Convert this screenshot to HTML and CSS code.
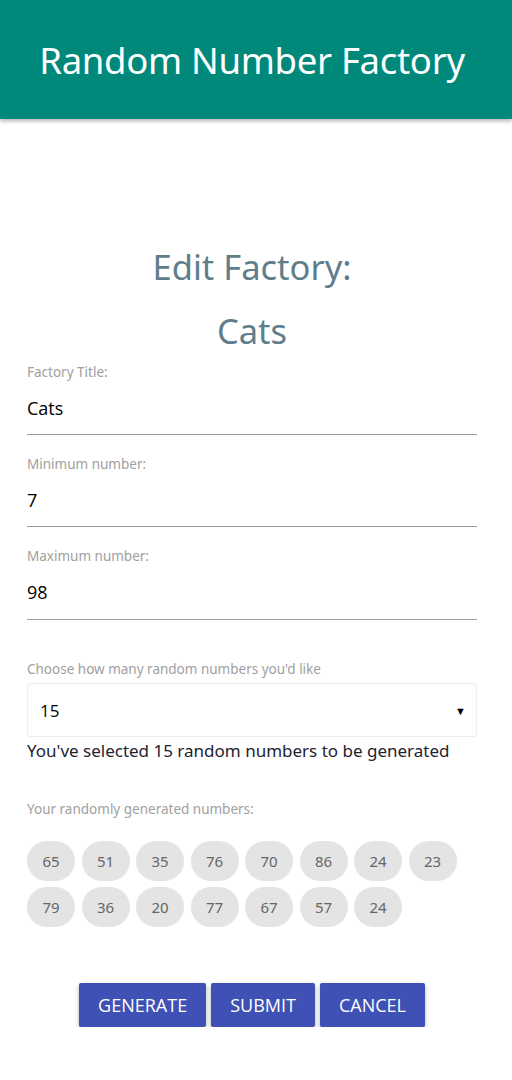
FILE: index.html
```html
<!DOCTYPE html>
<html>
<head>
<meta charset="utf-8">
<link rel="stylesheet" href="styles.css">
</head>
<body>
<header class="appbar"><h1>Random Number Factory</h1></header>
<main class="content">
  <div class="heading">
    <h2 class="title">Edit Factory:</h2>
    <h2 class="title">Cats</h2>
  </div>
  <div class="field">
    <label>Factory Title:</label>
    <div class="value">Cats</div>
  </div>
  <div class="field">
    <label>Minimum number:</label>
    <div class="value">7</div>
  </div>
  <div class="field">
    <label>Maximum number:</label>
    <div class="value">98</div>
  </div>
  <div class="choose">
    <label>Choose how many random numbers you'd like</label>
    <div class="select"><span>15</span><span class="arrow">&#9660;</span></div>
    <p class="selected">You've selected 15 random numbers to be generated</p>
  </div>
  <div class="generated">
    <label>Your randomly generated numbers:</label>
    <div class="chips">
      <span class="chip">65</span><span class="chip">51</span><span class="chip">35</span><span class="chip">76</span><span class="chip">70</span><span class="chip">86</span><span class="chip">24</span><span class="chip">23</span>
      <span class="chip">79</span><span class="chip">36</span><span class="chip">20</span><span class="chip">77</span><span class="chip">67</span><span class="chip">57</span><span class="chip">24</span>
    </div>
  </div>
  <div class="actions">
    <button class="btn">GENERATE</button>
    <button class="btn">SUBMIT</button>
    <button class="btn">CANCEL</button>
  </div>
</main>
</body>
</html>
```
FILE: styles.css
```css
* { box-sizing: border-box; }
body {
  margin: 0;
  font-family: "Noto Sans", "Open Sans", sans-serif;
  background: #fff;
}
.appbar {
  height: 119px;
  background: #00897b;
  box-shadow: 0 2px 4px rgba(0,0,0,0.3);
  display: flex;
  align-items: center;
  justify-content: center;
  padding-right: 8px;
}
.appbar h1 {
  margin: 0;
  color: #fff;
  font-weight: 400;
  font-size: 36.5px;
  letter-spacing: -0.3px;
}
.content {
  padding: 0 35px 0 27px;
}
.heading {
  padding-top: 116px;
}
.title {
  margin: 0;
  text-align: center;
  color: #607d8b;
  font-weight: 400;
  font-size: 34.5px;
  line-height: 64px;
}
label {
  display: block;
  color: #a0a0a0;
  font-size: 13.5px;
  line-height: 18px;
}
.value {
  font-family: "Open Sans", sans-serif;
  font-size: 18px;
  color: #000;
  line-height: 26px;
  padding: 14px 0 13px;
  border-bottom: 1px solid #9e9e9e;
  margin-bottom: 20px;
}
.field:nth-of-type(4) .value { padding-bottom: 14px; }
.choose { padding-top: 20px; }
.select {
  margin-top: 5px;
  height: 54px;
  border: 1px solid #eeeeee;
  border-radius: 3px;
  display: flex;
  align-items: center;
  justify-content: space-between;
  padding: 0 10px 0 12px;
  font-family: "Open Sans", sans-serif;
  font-size: 17px;
  color: #000;
}
.arrow { font-size: 11px; }
.selected {
  margin: 2px 0 0;
  font-size: 17px;
  color: #23232f;
  line-height: 24px;
}
.generated { padding-top: 37px; }
.chips {
  margin-top: 23px;
  display: flex;
  flex-wrap: wrap;
  column-gap: 6.5px;
  row-gap: 6px;
  width: 440px;
}
.chip {
  width: 48px;
  height: 40px;
  border-radius: 20px;
  background: #e4e4e4;
  color: #666;
  font-size: 15px;
  display: flex;
  align-items: center;
  justify-content: center;
}
.actions {
  margin-top: 56px;
  display: flex;
  justify-content: center;
  gap: 5px;
}
.btn {
  height: 44px;
  border: none;
  border-radius: 2px;
  background: #3f51b5;
  color: #fff;
  font-family: "Open Sans", sans-serif;
  font-size: 18px;
  padding: 0 19px;
  box-shadow: 0 2px 4px rgba(0,0,0,0.3);
}
```
